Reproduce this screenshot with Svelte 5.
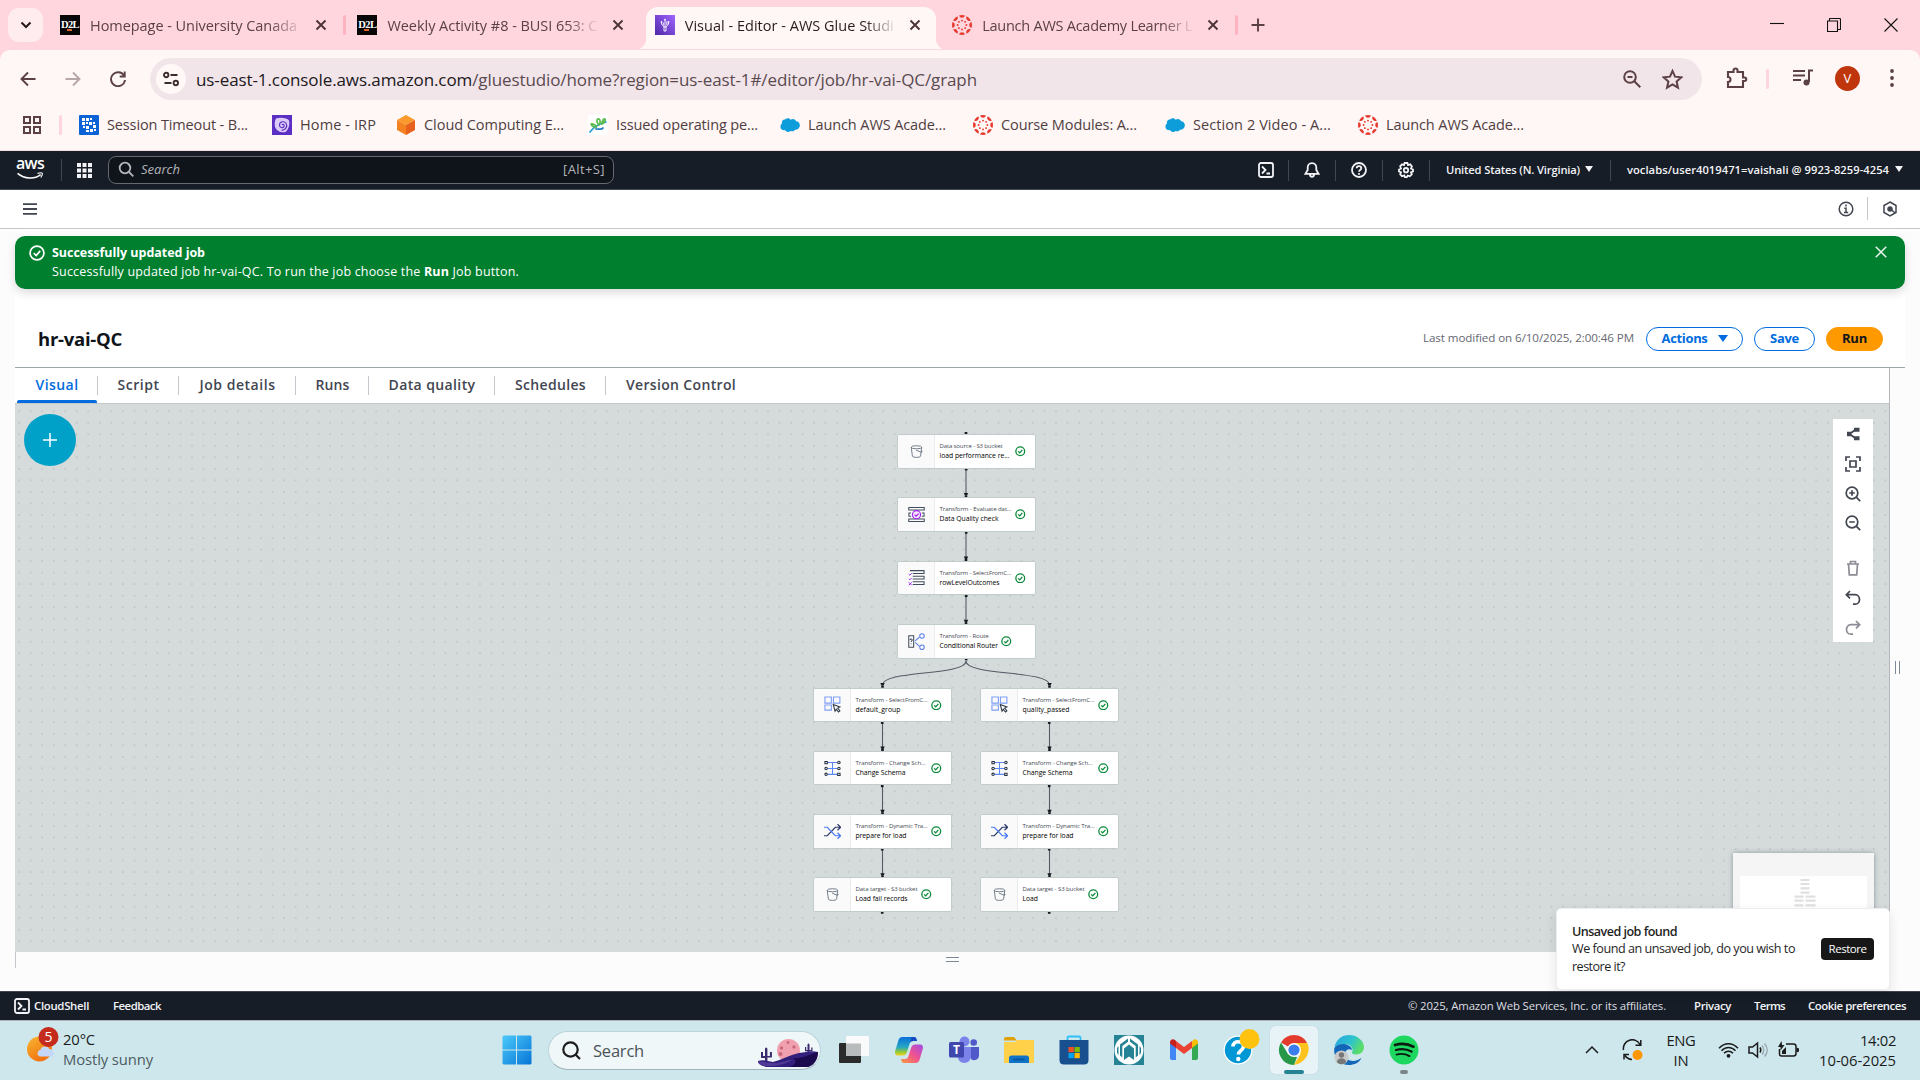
<script>
  // Spreads the letters of a label so that it fills the given width in pixels.
  function fit(node, width) {
    const natural = node.getBoundingClientRect().width;
    const count = node.textContent.length;
    node.style.letterSpacing = `${(width - natural) / count}px`;
  }

  const tabs = [
    { icon: 'd2l', label: 'Homepage - University Canada', w: 207 },
    { icon: 'd2l', label: 'Weekly Activity #8 - BUSI 653: C', w: 210 },
    { icon: 'glue', label: 'Visual - Editor - AWS Glue Studi', w: 209, active: true },
    { icon: 'canvas', label: 'Launch AWS Academy Learner L', w: 210 }
  ];

  const bookmarks = [
    { icon: 'session', label: 'Session Timeout - B...', w: 141, cell: 193 },
    { icon: 'irp', label: 'Home - IRP', w: 76, cell: 124 },
    { icon: 'cube', label: 'Cloud Computing E...', w: 140, cell: 192 },
    { icon: 'leaf', label: 'Issued operating pe...', w: 142, cell: 192 },
    { icon: 'cloud', label: 'Launch AWS Acade...', w: 138, cell: 193 },
    { icon: 'canvas', label: 'Course Modules: A...', w: 136, cell: 192 },
    { icon: 'cloud', label: 'Section 2 Video - A...', w: 138, cell: 193 },
    { icon: 'canvas', label: 'Launch AWS Acade...', w: 138, cell: 192 }
  ];

  const views = [
    { label: 'Visual', w: 43, cell: 82, active: true },
    { label: 'Script', w: 42, cell: 81 },
    { label: 'Job details', w: 76, cell: 117 },
    { label: 'Runs', w: 34, cell: 73 },
    { label: 'Data quality', w: 87, cell: 126 },
    { label: 'Schedules', w: 71, cell: 111 },
    { label: 'Version Control', w: 110, cell: 150 }
  ];

  // Node positions are relative to the canvas origin.
  const nodes = [
    { x: 882, y: 30, icon: 'bucket', kind: 'Data source - S3 bucket', kw: 63, name: 'load performance re...', nw: 70, ok: 117 },
    { x: 882, y: 93.3, icon: 'quality', kind: 'Transform - Evaluate dat...', kw: 72, name: 'Data Quality check', nw: 59, ok: 117 },
    { x: 882, y: 156.7, icon: 'rows', kind: 'Transform - SelectFromC...', kw: 72, name: 'rowLevelOutcomes', nw: 60, ok: 117 },
    { x: 882, y: 220, icon: 'route', kind: 'Transform - Route', kw: 49, name: 'Conditional Router', nw: 58.5, ok: 103 },
    { x: 798, y: 283.5, icon: 'select', kind: 'Transform - SelectFromC...', kw: 72, name: 'default_group', nw: 45, ok: 117 },
    { x: 798, y: 346.8, icon: 'schema', kind: 'Transform - Change Sch...', kw: 70, name: 'Change Schema', nw: 50, ok: 117 },
    { x: 798, y: 410.1, icon: 'shuffle', kind: 'Transform - Dynamic Tra...', kw: 72, name: 'prepare for load', nw: 51, ok: 117 },
    { x: 798, y: 473.4, icon: 'bucket', kind: 'Data target - S3 bucket', kw: 62, name: 'Load fail records', nw: 52, ok: 107 },
    { x: 965, y: 283.5, icon: 'select', kind: 'Transform - SelectFromC...', kw: 72, name: 'quality_passed', nw: 47, ok: 117 },
    { x: 965, y: 346.8, icon: 'schema', kind: 'Transform - Change Sch...', kw: 70, name: 'Change Schema', nw: 50, ok: 117 },
    { x: 965, y: 410.1, icon: 'shuffle', kind: 'Transform - Dynamic Tra...', kw: 72, name: 'prepare for load', nw: 51, ok: 117 },
    { x: 965, y: 473.4, icon: 'bucket', kind: 'Data target - S3 bucket', kw: 62, name: 'Load', nw: 15.5, ok: 107 }
  ];

  const edges = [
    [951, 64], [951, 127.4], [951, 190.7],
    [867.5, 317.5], [867.5, 380.8], [867.5, 444.2],
    [1034.5, 317.5], [1034.5, 380.8], [1034.5, 444.2]
  ];

  const petals = [0, 45, 90, 135, 180, 225, 270, 315];
</script>

{#snippet favicon(name)}
  {#if name === 'd2l'}
    <span class="d2l">D2L<i></i></span>
  {:else}
    <svg class="fav" viewBox="0 0 20 20">
      {#if name === 'glue'}
        <defs><linearGradient id="gl" x1="0" y1="1" x2="1" y2="0"><stop offset="0" stop-color="#4d27a8" /><stop offset="1" stop-color="#a166ff" /></linearGradient></defs>
        <rect width="20" height="20" fill="url(#gl)" />
        <g stroke="#fff" stroke-width=".9" fill="none"><path d="M6.500 7.500v1.500l2.500 3h2l2.500-3V7.500M10 5v7M8.300 7.500v3M11.800 6.500v3.500M9 12v4h2v-4" /></g>
        <g fill="#fff"><circle cx="6.500" cy="7" r=".9" /><circle cx="13.500" cy="7" r=".9" /><circle cx="10" cy="4.600" r=".9" /></g>
      {:else if name === 'canvas'}
        <g fill="#e63a2e">
          {#each petals as a}
            <g transform="rotate({a} 10 10)"><path d="M7 .5a10 10 0 0 1 6 0a3.1 3.1 0 0 1-6 0z" /><circle cx="10" cy="5.6" r=".95" /></g>
          {/each}
        </g>
      {:else if name === 'session'}
        <rect width="20" height="20" rx="1" fill="#0b63d6" />
        <g fill="#fff"><path d="M3 3h3v3H3zM7 3h3v3H7zM11 3h2v2h-2zM3 7h3v3H3zM10 7h3v3h-3zM14 7h2v2h-2zM7 11h3v3H7zM14 10h3v3h-3zM4 11h2v2H4zM7 15h3v2H7zM11 14h3v3h-3zM15 14h2v2h-2zM7 7h2v2H7z" /></g>
      {:else if name === 'irp'}
        <rect width="20" height="20" fill="#5b2fc4" />
        <path d="M4 3.500c4-1.500 11-1 13 2 1 4-.5 9-3.500 11.500-5 1-9-1-10.500-5-.5-3-.5-6 1-8.500z" fill="#dccbfa" />
        <g fill="none" stroke="#5a2bbd" stroke-width="1.1"><path d="M10 10c1-1.6 3 0 2 1.6-1.3 2-4.600 1-4.500-1.700C7.600 6.600 12 5.600 14 8.200c2 3-.4 7-4.400 7.200" /></g>
      {:else if name === 'cube'}
        <path d="M10 0l9 5-9 5-9-5z" fill="#fa9a2c" /><path d="M1 5l9 5v10l-9-5z" fill="#f58220" /><path d="M19 5l-9 5v10l9-5z" fill="#e8611c" />
      {:else if name === 'leaf'}
        <rect width="20" height="20" fill="#fff" />
        <g fill="none" stroke-width="1.700" stroke-linecap="round"><path d="M2 17c4-6 9-8 16-10" stroke="#2a9fd8" /><path d="M6 12c-3-2-4-4-1-3s4 3 3 4M10 9c-2-3-1-6 1-5s1 5 0 6M14 9c0-3 2-6 3-5s-1 4-3 5" stroke="#57b947" /><path d="M8 14c3 0 6 1 7-1" stroke="#1f7fc4" /></g>
      {:else}
        <path d="M5 4.500c2-2 4.500-1.500 5.500.2 3-1.500 5 0 5.500 1.500 3 0 4.500 3 3.600 5.600-.8 2.500-3 3.200-4.600 2.900-1 1.500-3 2-4.500 1.200-1.500 1.700-4.500 1.400-5.500-.8C2 15.500.2 13.500.5 11.500c0-1.600.8-2.500 1.500-3C1.300 6.500 3 4 5 4.500z" fill="#0d9ddb" />
      {/if}
    </svg>
  {/if}
{/snippet}

{#snippet cross()}
  <svg class="cross" viewBox="0 0 12 12"><path d="M1.500 1.500l9 9M10.500 1.500l-9 9" /></svg>
{/snippet}

{#snippet shell()}
  <svg class="i16" viewBox="0 0 16 16"><rect x="1" y="1" width="14" height="14" rx="2" /><path d="M4 4.500L7.500 8 4 11.500M8.500 11.500H12" /></svg>
{/snippet}

{#snippet nodeIcon(name)}
  <svg class="nicon" viewBox="0 0 18 18">
    {#if name === 'bucket'}
      <g stroke="#5f6b7a" stroke-width=".9"><ellipse cx="9" cy="4.500" rx="5.600" ry="1.600" /><path d="M3.400 4.500l1.300 9.500c.3 1.600 8.300 1.600 8.600 0l1.300-9.500M8.500 7.500l5.200 2.200c1.500.5 1.400-1 .6-1.500" /></g>
    {:else if name === 'quality'}
      <g stroke="#414d5c" stroke-width="1.100"><path d="M.8 1.500h16.400v2.700H.8zM.8 13.800h16.400v2.700H.8zM3.300 7.400H1v3.500h2.300M14.700 7.400H17v3.500h-2.300" /></g>
      <g stroke="#a020f0" stroke-width="1.200"><circle cx="9" cy="9.200" r="4.300" fill="#f5e3ff" /><path d="M7 9.200l1.500 1.500L11.300 8" /></g>
    {:else if name === 'rows'}
      <g stroke="#414d5c" stroke-width="1.100"><path d="M2 1.700h15v3H5M5 7.600h12v3H5M5 13.500h12v3H5" /></g>
      <g stroke="#a020f0" stroke-width="1"><path d="M.8 5.500l1.200 1 2-2M.8 10.500l1.200 1 2-2M.8 14l3.200 3.200M4 14L.8 17.200" /></g>
    {:else if name === 'route'}
      <g stroke="#414d5c" stroke-width="1.100"><path d="M.8 3h5.200v12H.8zM2.300 7.500c0-1.800 2.300-1.500 2.100 0-.1.900-1 .8-1 1.900M3.400 11v.9" /></g>
      <g stroke="#5c7fe8" stroke-width="1.100"><path d="M7.500 8.300l4.500-3.800M7.500 10l4.500 4" /><circle cx="14.800" cy="3.200" r="2.400" /><circle cx="14.800" cy="15.200" r="2.400" /></g>
    {:else if name === 'select'}
      <g stroke="#7f9ff5" stroke-width="1.200"><path d="M1 1h6.800v6.600H1zM10 1h6.800v6.600H10zM1 9.500h6.800V15H1z" /></g>
      <path d="M9.800 9l7 2.600-2.300 1.200 2.300 3-1.500 1.200-2.300-3-1.300 2z" stroke="#333d4a" stroke-width="1.200" fill="#fff" />
    {:else if name === 'schema'}
      <g stroke="#5c86f5" stroke-width="1.100"><path d="M3.500 2.700h11M3.500 9h11M3.500 15.200h11M9 2.700v12.500" /></g>
      <g stroke="#232f3e" stroke-width="1.100" fill="#fff"><path d="M1 1.500h2.500v2.400H1zM14.500 14H17v2.400h-2.500z" /><circle cx="2.200" cy="9" r="1.300" /><circle cx="2.200" cy="15.200" r="1.300" /><circle cx="15.800" cy="2.700" r="1.300" /><circle cx="15.800" cy="9" r="1.300" /></g>
    {:else}
      <g stroke-width="1.300"><path d="M0 13.500h3.500L12 4.500h5.500M14.300 1.300l3.200 3.200-3.200 3.200" stroke="#2b3a67" /><path d="M0 4.500h3.500L12 13.500h5.500M14.300 10.300l3.200 3.200-3.200 3.200" stroke="#4a7bf7" /></g>
    {/if}
  </svg>
{/snippet}

<div class="screen">
  <header class="browser">
    <div class="tabstrip">
      <button class="tabsearch" aria-label="Search tabs"><svg width="12" height="8" viewBox="0 0 12 8"><path d="M1.500 1.500L6 6l4.500-4.500" /></svg></button>
      {#each tabs as t, i}
        <div class="tab" class:active={t.active}>
          {@render favicon(t.icon)}
          <div class="tabtext"><span use:fit={t.w}>{t.label}</span></div>
          {@render cross()}
          {#if i === 0 || i === 3}<i class="sep"></i>{/if}
        </div>
      {/each}
      <svg class="plus" viewBox="0 0 14 14"><path d="M7 .5v13M.5 7h13" /></svg>
      <div class="winctl">
        <svg viewBox="0 0 14 14"><path d="M0 5.500h14" /></svg>
        <svg viewBox="0 0 14 14"><path d="M.5 3h10v10.500H.5zM2.500 3V1q0-.5.500-.5h9.500q1 0 1 1V11q0 .5-.5.5h-2" /></svg>
        <svg viewBox="0 0 14 14"><path d="M.5.5l13 13M13.500.5l-13 13" /></svg>
      </div>
    </div>

    <div class="toolbar">
      <div class="navs">
        <svg viewBox="0 0 16 16"><path d="M15.500 8H1.500M8 1.500L1.500 8 8 14.500" /></svg>
        <svg class="off" viewBox="0 0 16 16"><path d="M.5 8h14M8 1.500L14.500 8 8 14.500" /></svg>
        <svg viewBox="0 0 16 16"><path d="M14 4.500A7 7 0 1 0 15 9M14.700.5v5h-5" /></svg>
      </div>
      <div class="omnibox">
        <span class="chip"><svg width="16" height="16" viewBox="0 0 16 16"><circle cx="3.200" cy="4" r="2.200" /><path d="M7.500 4h7M1.500 12h7" /><circle cx="12.800" cy="12" r="2.200" /></svg></span>
        <span class="url" use:fit={781}><b>us-east-1.console.aws.amazon.com</b>/gluestudio/home?region=us-east-1#/editor/job/hr-vai-QC/graph</span>
        <svg class="mag" viewBox="0 0 18 18"><circle cx="7" cy="7" r="5.800" /><path d="M11.300 11.300l6 6M4.500 7h5" /></svg>
        <svg class="star" viewBox="0 0 20 20"><path d="M10 1.800l2.400 5.500 6 .6-4.500 4 1.300 5.900-5.200-3.100-5.200 3.100 1.300-5.900-4.500-4 6-.6z" /></svg>
      </div>
      <svg class="ext" viewBox="0 0 22 22"><path d="M2 5h5.500V3.500a2 2 0 0 1 4 0V5H17v5.500h1.500a1.500 1.500 0 0 1 0 3.500H17v6H2v-5a2.500 2.500 0 0 0 0-5z" /></svg>
      <i class="sep"></i>
      <svg class="music" viewBox="0 0 20 18"><path d="M0 2h12M0 6.500h12M0 11h8M16 13V1.500h4" /><circle cx="13.500" cy="13.500" r="3" /></svg>
      <span class="avatar">V</span>
      <svg class="kebab" viewBox="0 0 4 18"><circle cx="2" cy="2" r="1.900" /><circle cx="2" cy="9" r="1.900" /><circle cx="2" cy="16" r="1.900" /></svg>
    </div>

    <div class="bookmarks">
      <svg class="apps" viewBox="0 0 18 18"><path d="M1 1h6v6H1zM11 1h6v6h-6zM1 11h6v6H1zM11 11h6v6h-6z" /></svg>
      <i class="sep"></i>
      <div class="marks">
        {#each bookmarks as b}
          <div class="mark" style:width="{b.cell}px">{@render favicon(b.icon)}<span use:fit={b.w}>{b.label}</span></div>
        {/each}
      </div>
    </div>
  </header>

  <nav class="awsnav">
    <div class="logo">
      <span use:fit={28}>aws</span>
      <svg width="30" height="9" viewBox="0 0 30 9"><path d="M1 1.500c8 6.500 19 7 26 1.500" stroke-width="1.700" /><path d="M23.500 1.600c3-.8 5-.7 5.300-.2.300.7-.3 2.800-1.700 4.800" stroke-width="1.300" /></svg>
    </div>
    <i class="vr"></i>
    <svg class="grid9" viewBox="0 0 15 15"><path d="M0 0h4v4H0zM5.500 0h4v4h-4zM11 0h4v4h-4zM0 5.500h4v4H0zM5.500 5.500h4v4h-4zM11 5.500h4v4h-4zM0 11h4v4H0zM5.500 11h4v4h-4zM11 11h4v4h-4z" /></svg>
    <div class="search">
      <svg class="i16" viewBox="0 0 16 16"><circle cx="7" cy="7" r="5.300" /><path d="M11 11l4.300 4.300" /></svg>
      <em use:fit={39}>Search</em>
      <span use:fit={42}>[Alt+S]</span>
    </div>
    <div class="tools">
      <div>{@render shell()}</div>
      <div><svg class="i16" viewBox="0 0 16 16"><path d="M8 1.200c-3 0-4.300 2-4.300 4.300V8L1.500 11.800h13L12.300 8V5.500C12.300 3.200 11 1.200 8 1.200zM6 12.500c0 3 4 3 4 0" /></svg></div>
      <div><svg class="i16" viewBox="0 0 16 16"><circle cx="8" cy="8" r="7" /><path d="M5.700 6.300c0-3 4.600-3 4.600 0 0 1.700-2.300 1.700-2.300 3.400M8 11v1.700" /></svg></div>
      <div><svg class="i16" viewBox="0 0 16 16"><path d="M6.600 1h2.800l.6 2 2.200-.7 1.700 2L13 6.500l2 1v2l-2 .8.800 2-2 2-2-.8-1 1.700H7l-.8-1.700-2.200.8-1.800-2 .8-2-2-.8v-2l2-1-.8-2.200 1.800-2L6 3z" /><circle cx="8" cy="8.200" r="2.200" /></svg></div>
    </div>
    <div class="region"><span use:fit={134}>United States (N. Virginia)</span><i class="tri"></i></div>
    <div class="account"><span use:fit={262}>voclabs/user4019471=vaishali @ 9923-8259-4254</span><i class="tri"></i></div>
  </nav>

  <div class="crumbbar">
    <svg width="14" height="12" viewBox="0 0 14 12"><path d="M0 1.200h14M0 6h14M0 10.800h14" /></svg>
    <div class="right">
      <svg class="i16" viewBox="0 0 16 16"><circle cx="8" cy="8" r="6.800" /><path d="M8 3.600v1.800M6.300 7.300H8v4M6 11.600h4.200" /></svg>
      <i></i>
      <svg class="i16" viewBox="0 0 16 16"><path d="M8 1l6 3.500v7L8 15l-6-3.500v-7zM9 8.500l4.500 3.800" /><circle cx="8" cy="8" r="2" fill="#424650" /></svg>
    </div>
  </div>

  <main>
    <section class="top">
      <div class="flash">
        <svg class="i16" viewBox="0 0 16 16"><circle cx="8" cy="8" r="6.900" /><path d="M4.800 8.200l2.400 2.300 4-4.600" /></svg>
        <div class="msg">
          <strong use:fit={153}>Successfully updated job</strong>
          <span use:fit={467}>Successfully updated job hr-vai-QC. To run the job choose the <b>Run</b> Job button.</span>
        </div>
        {@render cross()}
      </div>
      <div class="jobhead">
        <h1 use:fit={84}>hr-vai-QC</h1>
        <div class="actions">
          <span class="mod" use:fit={211}>Last modified on 6/10/2025, 2:00:46 PM</span>
          <button class="btn a"><span use:fit={46}>Actions</span><i class="tri"></i></button>
          <button class="btn s"><span use:fit={29}>Save</span></button>
          <button class="btn r"><span use:fit={25}>Run</span></button>
        </div>
      </div>
    </section>

    <section class="body">
      <div class="editor">
        <div class="views">
          {#each views as v, i}
            <div class="view" class:active={v.active} class:last={i === 6} style:width="{v.cell}px"><span use:fit={v.w}>{v.label}</span></div>
          {/each}
        </div>
        <div class="canvas">
          <svg class="dots" width="1874" height="548">
            <defs><pattern id="dot" x="-1.600" y="1.500" width="11.520" height="11.520" patternUnits="userSpaceOnUse"><circle cx="5.760" cy="5.760" r=".75" fill="#a9b1b2" /></pattern></defs>
            <rect width="1874" height="548" fill="url(#dot)" />
            <g class="wires">
              {#each edges as [x, y]}
                <path d="M{x} {y}v28" />
              {/each}
              <path d="M951 257C951 272 867.500 266 867.500 281M951 257C951 272 1034.500 266 1034.500 281" />
            </g>
            <g class="tips">
              {#each [...edges, [867.5, 254], [1034.5, 254]] as [x, y]}
                <path d="M{x - 2.2} {y + 25}h4.400l-1.200 2.500h-2z" />
                <rect x={x - 1.3} y={y + 27.5} width="2.600" height="2.200" />
              {/each}
              {#each nodes as n}
                <rect x={n.x + 67.9} y={n.y + 34} width="2.600" height="2.400" />
              {/each}
              <rect x="949.700" y="28" width="2.600" height="2" />
            </g>
          </svg>
          {#each nodes as n}
            <div class="node" style:left="{n.x}px" style:top="{n.y}px">
              <div class="pic">{@render nodeIcon(n.icon)}</div>
              <div class="lbl"><small use:fit={n.kw}>{n.kind}</small><span use:fit={n.nw}>{n.name}</span></div>
              <svg class="ok" style:left="{n.ok}px" viewBox="0 0 10 10"><circle cx="5" cy="5" r="4.200" /><path d="M3 5.100l1.500 1.400L7 3.700" /></svg>
            </div>
          {/each}
          <div class="add"><svg width="16" height="16" viewBox="0 0 16 16"><path d="M8 1v14M1 8h14" /></svg></div>
          <div class="minimap"><div class="inner">
            <svg width="22" height="30" viewBox="0 0 22 30"><path d="M6.500 1h9M6.500 5h9M6.500 9.300h9M6.500 13.700h9M.5 17.700h9M.5 21.700h9M.5 26.300h9M11.500 17.700h10M11.500 21.700h10M11.500 26.300h10" /></svg>
          </div></div>
          <div class="palette">
            <svg viewBox="0 0 16 16"><path class="f" d="M2 5.800h4.500v4.400H2zM9 1.800h5.500v4H9zM9 10.200h5.500v4H9z" /><path d="M6 7l4-3M6 9l4 3" /></svg>
            <svg viewBox="0 0 16 16"><path d="M1 5V1h4M11 1h4v4M15 11v4h-4M5 15H1v-4M5 5h6v6H5z" /></svg>
            <svg viewBox="0 0 16 16"><circle cx="7" cy="7" r="5.800" /><path d="M11.200 11.200l4 4M7 4.200v5.600M4.200 7h5.600" /></svg>
            <svg viewBox="0 0 16 16"><circle cx="7" cy="7" r="5.800" /><path d="M11.200 11.200l4 4M4.200 7h5.600" /></svg>
            <svg class="dim gap" viewBox="0 0 16 16"><path d="M2 4h12M5.500 4V1.500h5V4M3.500 4l.8 10.800h7.400L12.500 4" /></svg>
            <svg viewBox="0 0 16 16"><path d="M5 1L1.300 4.700 5 8.400M1.300 4.700H10c6 0 6 9.500 0 9.500H8" /></svg>
            <svg class="dim" viewBox="0 0 16 16"><path d="M11 1l3.700 3.700L11 8.400M14.700 4.700H6c-6 0-6 9.500 0 9.500h2" /></svg>
          </div>
        </div>
        <div class="drawer"><i class="grip"></i></div>
      </div>
      <div class="side"><i class="vgrip"></i></div>
      <div class="toast">
        <p><b use:fit={105}>Unsaved job found</b><span use:fit={223}>We found an unsaved job, do you wish to</span><span use:fit={53}>restore it?</span></p>
        <button><span use:fit={38}>Restore</span></button>
      </div>
    </section>
  </main>

  <footer>
    {@render shell()}
    <span class="cs" use:fit={55}>CloudShell</span>
    <span use:fit={48}>Feedback</span>
    <div class="legal">
      <span class="copy" use:fit={258}>© 2025, Amazon Web Services, Inc. or its affiliates.</span>
      <span use:fit={37}>Privacy</span>
      <span class="terms" use:fit={31}>Terms</span>
      <span use:fit={98}>Cookie preferences</span>
    </div>
  </footer>

  <div class="taskbar">
    <div class="weather">
      <svg width="36" height="40" viewBox="0 0 36 40">
        <defs><linearGradient id="sun" x1="0" y1="0" x2=".6" y2="1"><stop offset="0" stop-color="#f7b731" /><stop offset="1" stop-color="#f1700f" /></linearGradient></defs>
        <circle cx="13.500" cy="22" r="12.500" fill="url(#sun)" />
        <path d="M14 29.500a3.500 3.500 0 0 1 .5-6.800c1-4 7.500-4 8.700-.7 5-.5 6.500 6.500 2 7.500z" fill="#c4d7f8" />
        <circle cx="22.500" cy="10" r="10" fill="#c42b1c" />
        <text x="22.500" y="15" text-anchor="middle" fill="#fff" font-size="14">5</text>
      </svg>
      <div><span use:fit={32}>20°C</span><span class="grey" use:fit={90}>Mostly sunny</span></div>
    </div>

    <div class="dock">
      <svg class="win" width="30" height="30" viewBox="0 0 30 30">
        <defs><linearGradient id="wg" x1="0" y1="0" x2="1" y2="1"><stop offset="0" stop-color="#4cc9fb" /><stop offset="1" stop-color="#0575d6" /></linearGradient></defs>
        <path d="M1.500.5H14v14H.5v-13zM15 .5h13.500l1 1v13H15zM.5 15.500H14v14H1.500l-1-1zM15 15.500h14.500v13l-1 1H15z" fill="url(#wg)" />
      </svg>
      <div class="pill">
        <svg width="19" height="19" viewBox="0 0 19 19"><circle cx="8.500" cy="8.500" r="7.200" /><path d="M13.500 13.500l4.500 4.500" /></svg>
        <span use:fit={51}>Search</span>
        <svg class="desert" width="62" height="30" viewBox="0 0 62 30">
          <circle cx="31.500" cy="12.500" r="11.500" fill="#f0a0ae" />
          <g fill="#c8697f"><circle cx="24.500" cy="10" r="1.700" /><circle cx="31" cy="4.500" r="1.400" /><circle cx="37" cy="9" r="1.700" /><circle cx="23.500" cy="16" r="2" /></g>
          <path d="M8 24v-13q0-1.500 1.200-1.500t1.200 1.500v7h2.500v-4h2v5.500h-4.500V26zM8 20H4v-6h2v4h2zM50.500 18V6.500q1-2 2 0V18zM48 9h1.200v3h5V9.500h1.300V13.300H48z" fill="#3b2a6e" />
          <path d="M1 23c5-2 10 0 15 1 9-2 16-7 26-9 8-1 12-3 19-1 0 6-4 13-10 15H9c-5-1-8-4-8-6z" fill="#33207c" />
          <path d="M36 20c8 1 16-3 25-6 0 8-4 13-10 15H32c6-2 9-5 4-9z" fill="#1c0a4f" />
          <path d="M1 24c5-1 12 2 20 1 6-1 9-3 14-3-6 4-15 6-22 6C6 29 2 27 1 24z" fill="#4f3b95" />
        </svg>
      </div>
      <div class="app"><svg viewBox="0 0 30 30"><rect x="0" y="8" width="22" height="20" rx="1" fill="#2b2b2b" /><rect x="7" y="1" width="23" height="20" rx="1" fill="#fafafa" /><path d="M7 8.500h15V21H7z" fill="#b9bcbd" /></svg></div>
      <div class="app"><svg viewBox="0 0 30 30">
        <defs><linearGradient id="c1" x1="0" y1="0" x2="0" y2="1"><stop offset="0" stop-color="#0b6fd8" /><stop offset=".55" stop-color="#25a7c4" /><stop offset=".8" stop-color="#8fc93a" /><stop offset="1" stop-color="#f4d11b" /></linearGradient><linearGradient id="c2" x1="1" y1="0" x2="0" y2="1"><stop offset="0" stop-color="#a24be8" /><stop offset=".5" stop-color="#f0538f" /><stop offset="1" stop-color="#fb9a3c" /></linearGradient></defs>
        <path d="M8.500 2H20c2 0 2.500 2 3 4h-4c-2 0-3 1-3.500 3L13 17c-.8 2.500-2 3.500-4.500 3.500H4c-2.500 0-3.500-2-2.800-4.500L4.500 5c.7-2 2-3 4-3z" fill="url(#c1)" />
        <path d="M21.500 28H10c-2 0-2.500-2-3-4h4c2 0 3-1 3.500-3L17 13c.8-2.500 2-3.500 4.500-3.500H26c2.500 0 3.500 2 2.800 4.500L25.500 25c-.7 2-2 3-4 3z" fill="url(#c2)" />
        <path d="M17.500 2H20c2 0 2.500 2 3 4h-4c-1.500 0-2.500.8-3 2z" fill="#1749c2" />
      </svg></div>
      <div class="app"><svg viewBox="0 0 30 30"><circle cx="15.500" cy="6.500" r="5" fill="#7b83eb" /><circle cx="24.700" cy="7.500" r="3.300" fill="#5059c9" /><path d="M19 12h11v8c0 5-5 6.500-8 4z" fill="#5059c9" /><path d="M9 12h13v9c0 9-13 9-13 1z" fill="#7b83eb" /><rect y="7" width="15" height="15.500" rx="1.500" fill="#4048b0" /><text x="7.500" y="19" text-anchor="middle" fill="#fff" font-size="12" font-weight="700">T</text></svg></div>
      <div class="app"><svg viewBox="0 0 30 30"><path d="M0 4q0-2 2-2h8l3 3.500H0z" fill="#e0a008" /><path d="M0 7h11l2-2h17v23H0z" fill="#ffd04a" /><path d="M5 28v-5q0-2.500 2.500-2.500h15Q25 20.500 25 23v5z" fill="#0f74c8" /><path d="M9.500 23.500h11v2h-11z" fill="#08589c" /></svg></div>
      <div class="app"><svg viewBox="0 0 30 30"><path d="M8.500 6V3.200Q8.500 1.500 10 1.500h10q1.500 0 1.500 1.700V6" fill="none" stroke="#2fc1f5" stroke-width="1.800" /><path d="M.5 5h29v20q0 4.500-4.500 4.500H5Q.5 29.500.5 25z" fill="#174f8f" /><path d="M9.500 12h5.300v5.200H9.500z" fill="#f25022" /><path d="M15.500 12h5.300v5.200h-5.300z" fill="#7fba00" /><path d="M9.500 18h5.300v5.200H9.500z" fill="#00a4ef" /><path d="M15.500 18h5.300v5.200h-5.300z" fill="#ffb900" /></svg></div>
      <div class="app"><svg viewBox="0 0 30 30"><path d="M0 0h30v30H0z" fill="#258393" /><circle cx="15" cy="15" r="14.500" fill="#fff" /><g fill="#258393"><path d="M10 13.500l5-4 5 4v11.500l-5-3.500-5 3.500z" /><path d="M14 3.500v3.300L8.300 11v11.500L6 20.500V9.500zM16 3.500v3.300l5.700 4.200v11.500l2.300-2V9.500zM4.500 11v9l-1.500-2v-5zM25.500 11v9l1.500-2v-5z" /></g></svg></div>
      <div class="app"><svg viewBox="0 0 30 30"><path d="M1 7v16q0 2 2 2h4V11z" fill="#4285f4" /><path d="M23 11v14h4q2 0 2-2V7z" fill="#34a853" /><path d="M23 7v6l6-4.500V7.500c0-3-3-4-5-2.500z" fill="#fbbc04" /><path d="M7 6l8 6 8-6v7l-8 6-8-6z" fill="#ea4335" /><path d="M1 7.500V8.500L7 13V6L6 5C4 3.500 1 4.500 1 7.500z" fill="#c5221f" /></svg></div>
      <div class="app"><svg viewBox="0 0 30 30"><circle cx="14" cy="15" r="14.500" fill="#fff" /><circle cx="14" cy="15" r="13.200" fill="#0097d6" /><path d="M9 11.500c0-6.500 10.500-6 10.500 0 0 4-5 3.800-5 8" fill="none" stroke="#fff" stroke-width="3.600" /><circle cx="14.300" cy="24" r="2.200" fill="#fff" /><circle cx="25.500" cy="4" r="10" fill="#ffc20e" /></svg></div>
      <div class="app on"><svg viewBox="0 0 30 30"><path d="M15 15L2 7.500A15 15 0 0 1 28 7.500z" fill="#e33b2e" /><path d="M15 30A15 15 0 0 1 2 7.500L9 19l9 3z" fill="#279847" /><path d="M15 8h13.300c4 8-1 20-13.300 22l6.500-11z" fill="#fcc31e" /><circle cx="15" cy="15" r="7" fill="#fff" /><circle cx="15" cy="15" r="5.600" fill="#3b7ded" /></svg><i></i></div>
      <div class="app"><svg viewBox="0 0 30 30">
        <defs><linearGradient id="e1" x1="0" y1="0" x2="1" y2=".4"><stop offset="0" stop-color="#2aa5e0" /><stop offset=".6" stop-color="#2cc3cf" /><stop offset="1" stop-color="#5bdc6a" /></linearGradient></defs>
        <path d="M.3 13C2 4 8 0 15 0c9 0 15 6.500 15 12 0 5-4 7.500-8 7.500-3 0-4.500-1.200-4-2.300C20 14 17 9 11 9 6 9 2 11 .3 13z" fill="url(#e1)" /><path d="M.2 13.500C2 10 6 8.800 10 9c5 .4 8 3.500 8 6-3-2-7 0-7 4 0 6 8 10 16.500 4C25 28 20 30 15 30 6 30-.6 22.500.2 13.500z" fill="#1267b8" /><circle cx="7.500" cy="22.500" r="7" fill="#c9c9c9" /><circle cx="7.500" cy="20" r="2.700" fill="#777" /><path d="M2.800 27c1-5 8.500-5 9.500 0-2.500 3-7 3-9.500 0z" fill="#777" /></svg></div>
      <div class="app dotted"><svg viewBox="0 0 30 30"><circle cx="15" cy="15" r="14.500" fill="#1ed760" /><g fill="none" stroke="#0b1a10" stroke-linecap="round"><path d="M6 10c6-1.700 13-1.200 18.500 1.700" stroke-width="2.700" /><path d="M7 15c5.500-1.500 11-1 15.500 1.600" stroke-width="2.300" /><path d="M7.500 19.600c4.500-1.200 9-.8 13 1.500" stroke-width="1.900" /></g></svg><i></i></div>
    </div>

    <div class="tray">
      <svg class="chev" width="14" height="9" viewBox="0 0 14 9"><path d="M1 8l6-6 6 6" /></svg>
      <svg class="sync" width="22" height="22" viewBox="0 0 22 22"><path d="M1.500 11A8.800 8.800 0 0 1 18 5.500M18.800 1v5.300h-5.300M2 20.500v-5h5M3 16.500c1.500 2.500 4 3.800 7 3.900" /><circle cx="15.500" cy="16" r="5" /></svg>
      <div class="lang"><span use:fit={29}>ENG</span><span use:fit={15}>IN</span></div>
      <svg class="wifi" width="21" height="16" viewBox="0 0 21 16"><path d="M1 6.200c5.500-6 13.500-6 19 0M3.500 8.800c4-4.400 10-4.400 14 0M6 11.300c2.700-2.900 6.300-2.900 9 0" /><circle cx="10.500" cy="13.800" r="1.900" /></svg>
      <svg class="vol" width="21" height="18" viewBox="0 0 21 18"><path d="M1 6h3.500L9.500 2v14l-5-4H1z" /><path d="M12 6.500c1 1.500 1 3.500 0 5" /><path class="faint" d="M14 4.500c2.300 2.800 2.300 6.500 0 9M16.500 2.500c3.600 4 3.600 9 0 13" /></svg>
      <svg class="bat" width="22" height="17" viewBox="0 0 22 17"><path d="M8 3h7.500q2.500 0 2.500 2.500v7q0 2.500-2.500 2.500h-12Q1.500 15 1.500 13V8" /><path class="f" d="M18.500 6.500l2.500 1v3l-2.500 1zM3.500 0L0 6h2.500v3.500L6.500 4H4zM4 13V10l4-4v7z" /></svg>
      <div class="clock"><span use:fit={36}>14:02</span><span use:fit={77}>10-06-2025</span></div>
    </div>
  </div>
</div>

<style>
  :global(body) { margin: 0; overflow: hidden; }
  .screen { width: 1920px; height: 1080px; display: flex; flex-direction: column; overflow: hidden; background: #fcfcfd; font-family: 'Open Sans', 'Noto Sans', sans-serif; }
  .screen * { box-sizing: border-box; }
  svg { flex: none; fill: none; display: block; }
  span, strong, em, small, h1 { white-space: nowrap; flex: none; }
  button { font: inherit; border: 0; padding: 0; }
  .i16 { width: 16px; height: 16px; stroke-width: 1.8; stroke: currentColor; }

  /* browser window */
  .browser { height: 151px; flex: none; background: #fff7f6; border-bottom: 1px solid #f9dde0; }
  .tabstrip { height: 50px; background: #ffd6de; display: flex; align-items: center; padding-left: 8px; position: relative; }
  .tabsearch { width: 35px; height: 34px; border-radius: 11px; background: #ffecef; display: flex; align-items: center; justify-content: center; margin-right: 4px; }
  .tabsearch svg { stroke: #23191b; stroke-width: 2; }
  .tab { width: 297.4px; flex: none; height: 50px; display: flex; align-items: center; padding-left: 13px; position: relative; }
  .tab.active::before { content: ''; position: absolute; z-index: 0; left: 4px; right: 3px; top: 7px; bottom: 0; border-radius: 12px 12px 0 0; background: #fff7f6; }
  .tab.active::after { content: ''; position: absolute; left: -8px; right: -9px; bottom: 0; height: 12px; background: radial-gradient(circle at 0 0, transparent 12px, #fff7f6 12.5px) left / 12px 12px no-repeat, radial-gradient(circle at 100% 0, transparent 12px, #fff7f6 12.5px) right / 12px 12px no-repeat; }
  .tab > :global(*) { position: relative; z-index: 1; }
  .fav { width: 20px; height: 20px; }
  .d2l { width: 20px; height: 20px; background: #050505; color: #fff; font: 700 10.5px/20px 'Liberation Serif', serif; letter-spacing: -.6px; text-align: center; position: relative; flex: none; }
  .d2l i { position: absolute; left: 7px; top: 14px; width: 5px; height: 1.5px; background: #d9652b; }
  .tabtext { width: 212px; margin: 0 0 0 10px; white-space: nowrap; font-size: 14.5px; color: #5b4145; mask-image: linear-gradient(90deg, #000 180px, transparent 213px); }
  .tabtext span { display: inline-block; }
  .active .tabtext { color: #2a1a1d; }
  .cross { width: 12px; height: 12px; margin-left: 12.5px; stroke: #4b3336; stroke-width: 1.9; }
  .tab .sep { position: absolute; left: 296px; }
  .sep { width: 3px; height: 20px; border-radius: 2px; background: #ffb3c1; flex: none; }
  .plus { width: 14px; height: 14px; margin-left: 14px; stroke: #5b4145; stroke-width: 1.9; }
  .winctl { margin-left: auto; display: flex; gap: 43px; padding-right: 22px; }
  .winctl svg { width: 14px; height: 14px; stroke: #111; stroke-width: 1.1; }
  .toolbar { height: 50px; padding-top: 8px; display: flex; align-items: flex-start; background: #fff7f6; border-radius: 10px 10px 0 0; box-shadow: 0 -12px 0 0 #ffd6de; position: relative; clip-path: inset(-1px 0 0 0); }
  .navs { width: 150px; height: 42px; padding-left: 20px; display: flex; align-items: center; gap: 29px; }
  .navs svg { width: 16px; height: 16px; stroke: #5b4145; stroke-width: 1.9; margin-top: -1px; }
  .navs .off { stroke: #b9a6a8; }
  .omnibox { width: 1552px; height: 42px; border-radius: 21px; background: #f2e5ea; display: flex; align-items: center; padding-left: 6px; }
  .chip { width: 30px; height: 30px; border-radius: 50%; background: #fff8f7; display: flex; align-items: center; justify-content: center; margin-right: 10px; }
  .chip svg { stroke: #3d2c30; stroke-width: 1.9; }
  .url { font-size: 17px; color: #5a4a4f; }
  .url b { font-weight: 400; color: #21181b; }
  .mag { width: 18px; height: 18px; margin-left: auto; stroke: #5b4145; stroke-width: 2; }
  .star { width: 21px; height: 21px; margin: 0 19px 0 21px; stroke: #5b4145; stroke-width: 1.9; }
  .ext { width: 22px; height: 22px; margin: 9px 18px 0 24px; stroke: #5b4145; stroke-width: 2.1; }
  .toolbar > .sep { margin: 11px 24px 0 0; background: #ffd6de; }
  .music { width: 20px; height: 18px; margin: 11px 22px 0 0; stroke: #5b4145; stroke-width: 2; }
  .music circle { fill: #5b4145; stroke: none; }
  .avatar { width: 25px; height: 25px; margin: 8px 30px 0 0; border-radius: 50%; background: #bf360c; color: #fff; font-size: 13px; line-height: 25px; text-align: center; }
  .kebab { width: 4px; height: 18px; margin-top: 11px; fill: #5b4145; }
  .bookmarks { height: 50px; display: flex; align-items: center; padding-left: 23px; }
  .apps { width: 18px; height: 18px; stroke: #5b4145; stroke-width: 2; }
  .bookmarks .sep { margin: 0 17px 0 18px; background: #ffd6de; }
  .marks { display: flex; }
  .mark { display: flex; align-items: center; gap: 8px; font-size: 14.5px; color: #4f3e41; flex: none; height: 20px; }
  .mark span { margin-top: -2px; }

  /* console navigation */
  .awsnav { height: 39px; flex: none; background: #161d26; border-bottom: 1px solid #424650; display: flex; align-items: center; color: #f3f3f7; font-weight: 600; }
  .logo { width: 61px; padding-left: 15px; display: flex; flex-direction: column; align-items: flex-start; }
  .logo span { font: 600 16px/12px 'Open Sans'; margin: -3px 0 3px 1px; color: #fff; }
  .logo svg { stroke: #fff; height: 8px; }
  .vr { width: 1px; height: 22px; background: #424650; margin-right: 15px; }
  .grid9 { width: 15px; height: 15px; fill: #f3f3f7; margin-right: 16px; }
  .search { width: 506px; height: 28px; border: 1px solid #656871; border-radius: 8px; background: #0f141a; display: flex; align-items: center; padding: 0 8px 2px 9px; color: #b4b4bb; font-size: 13px; font-weight: 400; }
  .search em { margin-left: 7px; }
  .search span { margin-left: auto; }
  .tools { display: flex; margin-left: 629px; }
  .tools div { width: 47px; height: 21px; display: flex; align-items: center; justify-content: center; border-right: 1px solid #424650; }
  .tools svg { margin-top: -1px; }
  .tools div:first-child { width: 46px; }
  .region, .account { display: flex; align-items: center; font-size: 11.2px; padding-bottom: 2px; }
  .region { width: 181px; height: 21px; padding-left: 16px; border-right: 1px solid #424650; gap: 5px; }
  .account { padding-left: 16px; gap: 6px; }
  .tri { border: 4px solid transparent; border-top: 6px solid currentColor; border-bottom: 0; flex: none; }
  .crumbbar { height: 39px; flex: none; background: #fff; border-bottom: 1px solid #c6c6cd; display: flex; align-items: center; padding: 0 0 1px 23px; }
  .crumbbar > svg { stroke: #424650; stroke-width: 1.8; }
  .right { display: flex; align-items: center; margin-left: auto; padding-right: 22px; color: #424650; }
  .right .i16 { stroke-width: 1.5; }
  .right i { width: 1px; height: 23px; background: #c6c6cd; margin: 0 14px 0 13px; }

  /* job editor */
  main { height: 762px; flex: none; padding: 7px 15px 0; }
  .top { height: 132px; background: #fff; border-bottom: 1px solid #99a9aa; }
  .flash { height: 53px; border-radius: 10px; background: #00802f; color: #fff; display: flex; padding: 9px 17px 0 14px; box-shadow: 0 4px 10px rgb(0 7 22 / .14); }
  .flash .i16 { stroke-width: 1.7; }
  .msg { display: flex; flex-direction: column; align-items: flex-start; margin: -2px 0 0 7px; font-size: 12.5px; line-height: 19px; font-weight: 500; }
  .flash .cross { margin: 0 0 0 auto; width: 14px; height: 14px; stroke: #e5f2ea; stroke-width: 1.3; }
  .jobhead { height: 78px; display: flex; align-items: center; padding: 22px 22px 0 22px; justify-content: space-between; }
  h1 { margin: 0 0 0 1px; font-size: 18.5px; line-height: 24px; color: #0f141a; font-weight: 700; }
  .actions { display: flex; align-items: center; margin-top: -1px; }
  .mod { font-size: 11.6px; color: #656871; margin: -2px 12px 0 0; }
  .btn { height: 24px; border: 1.5px solid #006ce0; border-radius: 12px; background: #fff; color: #006ce0; font-size: 13px; font-weight: 700; display: flex; align-items: center; justify-content: center; flex: none; padding-bottom: 1px; }
  .btn.a { width: 97px; margin-right: 11px; gap: 10px; }
  .btn.a .tri { border-width: 7px 5px 0; }
  .btn.s { width: 61px; margin-right: 11px; }
  .btn.r { width: 57px; background: #ff9900; border-color: #ff9900; color: #0f141a; }
  .body { display: flex; height: 623px; position: relative; }
  .editor { width: 1875px; height: 601px; }
  .views { height: 36px; background: #fff; border-bottom: 1px solid #c6c6cd; border-right: 1px solid #b4b4bb; display: flex; }
  .view { height: 35px; display: flex; align-items: center; justify-content: center; font-size: 14px; font-weight: 600; color: #424650; position: relative; flex: none; padding: 0 0 2px 2px; }
  .view::after { content: ''; position: absolute; right: -1px; top: 8px; width: 1px; height: 19px; background: #c6c6cd; }
  .view.last::after { display: none; }
  .view.active { color: #006ce0; }
  .view.active::before { content: ''; position: absolute; left: 2px; right: 0; bottom: 0; height: 3px; background: #006ce0; border-radius: 2px 2px 0 0; }
  .canvas { height: 548px; background: #d5dbdb; border-right: 1px solid #b4b4bb; position: relative; overflow: hidden; }
  .dots { position: absolute; left: 0; top: 0; }
  .wires { stroke: #545b64; stroke-width: 1.1; }
  .tips { fill: #16191f; }
  .node { position: absolute; width: 138.5px; height: 34.500px; border-radius: 2px; background: #fff; border: 1px solid #c3cccd; display: flex; }
  .pic { width: 37px; background: #fafafa; border-right: 1px solid #e9ebed; display: flex; align-items: center; justify-content: center; border-radius: 2px 0 0 2px; }
  .nicon { width: 17px; height: 17px; }
  .lbl { padding: 6px 0 0 4.500px; display: flex; flex-direction: column; align-items: flex-start; }
  .lbl small { font-size: 6.1px; line-height: 9px; color: #454c55; }
  .lbl span { font-size: 6.8px; line-height: 11px; color: #000; font-weight: 500; }
  .ok { position: absolute; top: 11px; width: 10.5px; height: 10.5px; stroke: #0b8a3a; stroke-width: 1.25; }
  .add { position: absolute; left: 9px; top: 10px; width: 52px; height: 52px; border-radius: 50%; background: #00a1c9; display: flex; align-items: center; justify-content: center; }
  .add svg { stroke: #fff; stroke-width: 1.5; }
  .minimap { position: absolute; left: 1718px; top: 449px; width: 141px; height: 110px; padding: 23px 7px; background: #f5f5f5; box-shadow: 0 0 5px rgb(0 28 36 / .35); }
  .inner { height: 80px; background: #fff; display: flex; justify-content: center; padding: 3px 0 0 2px; }
  .inner svg { stroke: #e0e0e0; stroke-width: 2.2; }
  .palette { position: absolute; left: 1818px; top: 15px; width: 40px; height: 223px; background: #fff; display: flex; flex-direction: column; align-items: center; padding: 7px 1px 0 0; gap: 13.8px; }
  .palette svg { width: 16px; height: 16px; stroke: #424650; stroke-width: 1.7; }
  .palette .f { fill: #424650; stroke: none; }
  .palette .dim { stroke: #8c8c94; }
  .palette .gap { margin-top: 15px; }
  .drawer { height: 16px; border-left: 1px solid #c6c6cd; display: flex; justify-content: center; align-items: center; padding: 0 2px 2px 0; }
  .grip { width: 13px; height: 5px; border: solid #7d8998; border-width: 1.5px 0; }
  .side { width: 15px; display: flex; align-items: center; justify-content: center; height: 598px; }
  .vgrip { width: 5px; height: 13px; border: solid #7d8998; border-width: 0 1.5px; }
  .toast { position: absolute; left: 1541px; top: 540px; width: 334px; height: 82px; border-radius: 5px; background: #fff; border: 1px solid #ededed; box-shadow: 0 4px 12px rgb(0 0 0 / .1); display: flex; align-items: center; justify-content: space-between; padding: 0 15px 0 15px; color: #1f1f1f; font-size: 12.6px; line-height: 17.2px; }
  .toast p { margin: 0; display: flex; flex-direction: column; align-items: flex-start; }
  .toast b { font-weight: 600; }
  .toast button { width: 53px; height: 22px; border-radius: 4px; background: #171717; color: #fff; font-size: 11.5px; line-height: 20px; font-weight: 500; }
  .toast button span { display: inline-block; }

  footer { height: 30px; flex: none; background: #161d26; border-top: 1px solid #424650; border-bottom: 1px solid #aeb6ba; color: #f3f3f7; display: flex; align-items: center; padding: 0 14px 1px 14px; font-size: 11.4px; font-weight: 600; }
  footer span { margin-top: -1px; }
  footer .cs { margin: -1px 24px 0 4px; }
  .legal { margin-left: auto; display: flex; }
  .copy { margin-right: 28px; font-weight: 500; color: #dedee3; }
  .terms { margin: -1px 23px 0; }

  /* system taskbar */
  .taskbar { height: 59px; background: #cee7ed; display: flex; color: #1b1b1b; font-size: 14.8px; }
  .weather { width: 502px; padding: 6px 0 0 26px; display: flex; gap: 1px; }
  .weather > div { display: flex; flex-direction: column; align-items: flex-start; line-height: 20px; padding-top: 2px; }
  .grey { color: #4d5b5f; }
  .dock { display: flex; align-items: center; padding-bottom: 1px; }
  .pill { width: 273px; height: 39px; margin: 0 5px 0 16px; border-radius: 20px; background: #f0f7f9; border: 1px solid #bcd3da; border-bottom-color: #9fb3ba; display: flex; align-items: center; padding-left: 13px; font-size: 16.5px; color: #4b5357; }
  .pill > svg { stroke: #1d1d1d; stroke-width: 2.2; }
  .pill span { margin-left: 12px; }
  .pill .desert { stroke: none; margin: 5px 1px 0 auto; }
  .app { width: 55px; height: 48px; display: flex; align-items: center; justify-content: center; position: relative; }
  .app svg { width: 30px; height: 30px; overflow: visible; }
  .app.on::before { content: ''; position: absolute; inset: 0 3px 0 4px; border-radius: 5px; background: #e7f3f7; box-shadow: 0 0 1px #9fb8c0; }
  .app.on svg { position: relative; }
  .app i { position: absolute; bottom: 0; left: 18px; width: 20px; height: 4px; border-radius: 2px; background: #258393; }
  .app.dotted i { left: 24px; width: 8px; background: #7c868a; }
  .tray { margin-left: auto; display: flex; align-items: center; padding: 0 24px 2px 0; line-height: 20px; }
  .tray svg { stroke: #1b1b1b; stroke-width: 1.5; }
  .chev { margin-right: 23px; }
  .sync { margin-right: 22px; }
  .sync circle { fill: #ff9500; stroke: none; }
  .lang { width: 30px; display: flex; flex-direction: column; align-items: center; margin-right: 22px; }
  .wifi circle, .bat .f { fill: #1b1b1b; stroke: none; }
  .wifi { margin-right: 9px; }
  .vol .faint { stroke: #98a9ae; }
  .vol { margin-right: 9px; }
  .clock { width: 78px; display: flex; flex-direction: column; align-items: flex-end; margin-left: 18px; }
</style>
